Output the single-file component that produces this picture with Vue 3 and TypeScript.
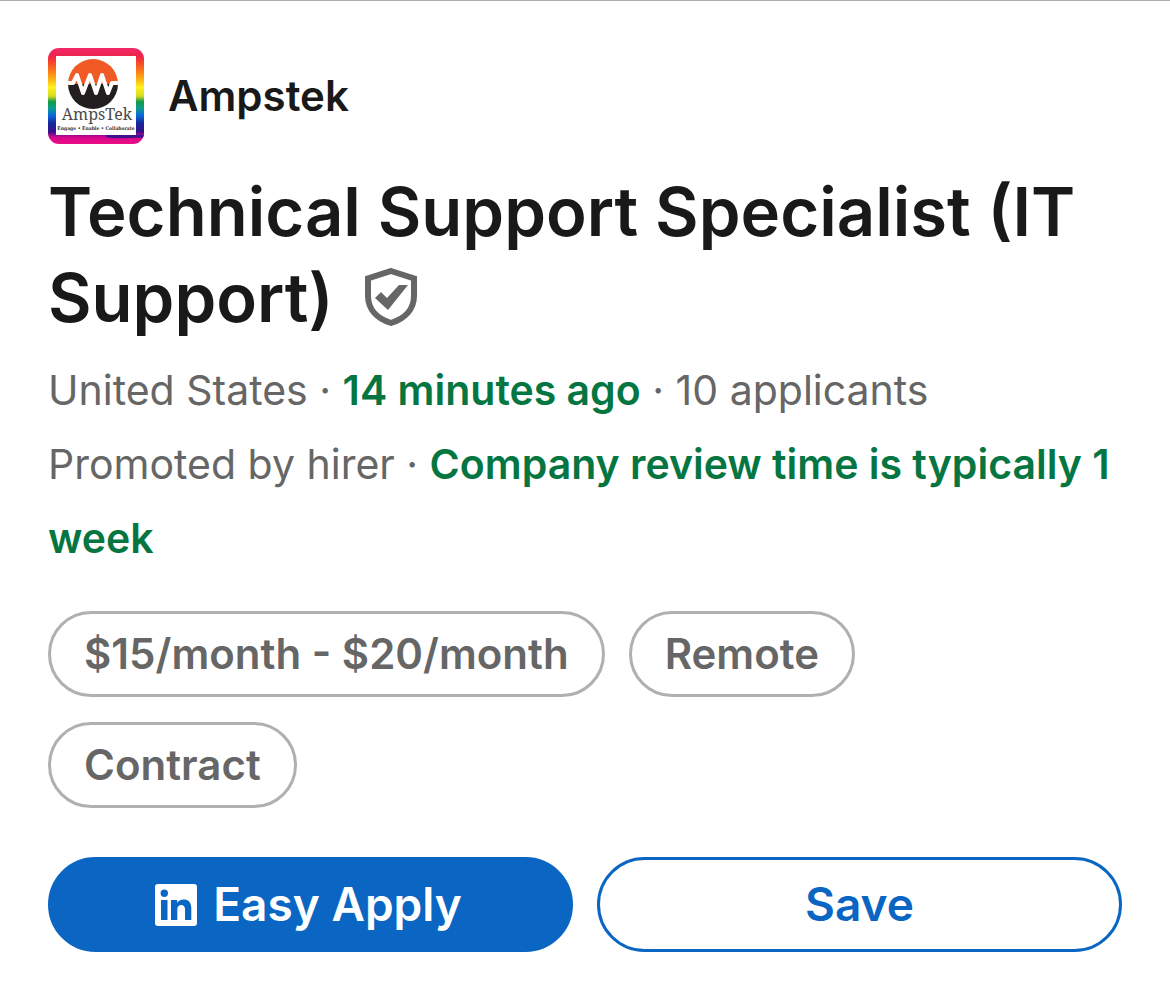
<script setup lang="ts">
import { ref } from 'vue'

interface Job {
  company: string
  title: string
  place: string
  posted: string
  applicants: string
  promotion: string
  review: string
  tags: string[]
}

const job: Job = {
  company: 'Ampstek',
  title: 'Technical Support Specialist (IT Support)',
  place: 'United States',
  posted: '14 minutes ago',
  applicants: '10 applicants',
  promotion: 'Promoted by hirer',
  review: 'Company review time is typically 1 week',
  tags: ['$15/month - $20/month', 'Remote', 'Contract'],
}

const saved = ref(false)
</script>

<template>
  <main class="job">
    <header class="company">
      <svg class="logo" viewBox="0 0 96 96" role="img" aria-label="AmpsTek logo">
        <defs>
          <linearGradient id="rainbow" x1="0" y1="0" x2="0" y2="1">
            <stop offset="0" stop-color="#f0286a" />
            <stop offset="0.09" stop-color="#ee2448" />
            <stop offset="0.14" stop-color="#f5402e" />
            <stop offset="0.24" stop-color="#fb7a17" />
            <stop offset="0.33" stop-color="#fdb515" />
            <stop offset="0.41" stop-color="#fff01c" />
            <stop offset="0.5" stop-color="#d5dc20" />
            <stop offset="0.56" stop-color="#0f9a48" />
            <stop offset="0.63" stop-color="#0b9c8c" />
            <stop offset="0.7" stop-color="#0869dc" />
            <stop offset="0.78" stop-color="#142a9c" />
            <stop offset="0.87" stop-color="#35108a" />
            <stop offset="0.93" stop-color="#d4088e" />
            <stop offset="1" stop-color="#ec0c82" />
          </linearGradient>
          <clipPath id="frame"><rect width="96" height="96" rx="11" /></clipPath>
          <clipPath id="disc"><circle cx="45" cy="36" r="25" /></clipPath>
        </defs>
        <g clip-path="url(#frame)">
          <rect width="96" height="96" fill="url(#rainbow)" />
          <path d="M58 87h38v3c-12-1-25 2-38-1z" fill="#41108c" />
          <rect x="8" y="8" width="80" height="79" fill="#fff" />
          <g clip-path="url(#disc)">
            <rect x="20" y="10" width="50" height="26" fill="#f15a24" />
            <rect x="20" y="36" width="50" height="26" fill="#231f20" />
            <path
              d="M18 35h7l4-8 6 18 7-18 6 18 6-18 6 18 4-10h8"
              fill="none"
              stroke="#fff"
              stroke-width="4"
              stroke-linejoin="round"
            />
          </g>
          <text class="logo-name" x="49" y="72" text-anchor="middle">AmpsTek</text>
          <text class="logo-motto" x="48" y="82" text-anchor="middle">Engage • Enable • Collaborate</text>
        </g>
      </svg>
      <a class="company-name" href="#">{{ job.company }}</a>
    </header>

    <h1 class="title">
      {{ job.title }}
      <svg class="shield" viewBox="0 0 54 58" role="img" aria-label="Verified job">
        <path
          d="M27 3 50 10.500V28C50 41 41 50.500 27 55 13 50.500 4 41 4 28V10.500Z"
          fill="none"
          stroke="#666"
          stroke-width="6"
        />
        <path d="M11 30 17 24 23 30 35 17H44L24 42Z" fill="#666" />
      </svg>
    </h1>

    <p class="meta">
      {{ job.place }} · <strong>{{ job.posted }}</strong> · {{ job.applicants }}
    </p>
    <p class="meta">
      {{ job.promotion }} · <strong>{{ job.review }}</strong>
    </p>

    <ul class="tags">
      <li v-for="tag in job.tags" :key="tag" class="tag">{{ tag }}</li>
    </ul>

    <div class="actions">
      <button class="action apply" type="button">
        <svg class="linkedin" viewBox="0 0 42 42" aria-hidden="true">
          <path
            fill="#fff"
            fill-rule="evenodd"
            d="M3 0H39A3 3 0 0 1 42 3V39A3 3 0 0 1 39 42H3A3 3 0 0 1 0 39V3A3 3 0 0 1 3 0ZM9.300 5.500A3.700 3.700 0 1 0 9.300 12.900 3.700 3.700 0 1 0 9.300 5.500ZM6 16V36H12.500V16ZM16 16V36H22.300V25.500C22.300 22.500 24 21 26.300 21S30 22.500 30 25.500V36H36.300V24C36.300 18 33 15.500 28.600 15.500 25.500 15.500 23.300 17 22.200 18.900V16Z"
          />
        </svg>
        <span>Easy Apply</span>
      </button>
      <button class="action save" type="button" :aria-pressed="saved" @click="saved = !saved">Save</button>
    </div>
  </main>
</template>

<style>
body {
  margin: 0;
  background: #fff;
}
</style>

<style scoped>
.job {
  box-sizing: border-box;
  border-top: 1px solid #acacac;
  padding: 47px 48px;
  font-family: Inter, "Liberation Sans", sans-serif;
  color: #191919;
}
.company {
  display: flex;
  align-items: center;
  gap: 24px;
}
.logo {
  width: 96px;
  height: 96px;
  flex: none;
}
.logo-name {
  font: 16px "Noto Serif", "DejaVu Serif", serif;
  fill: #4a4a4a;
}
.logo-motto {
  font: bold 5px "DejaVu Serif Condensed", "Liberation Serif", serif;
  fill: #333;
}
.company-name {
  font-size: 42px;
  font-weight: 600;
  line-height: 58px;
  color: inherit;
  text-decoration: none;
}
.title {
  margin: 25px 0 12px;
  font-size: 67px;
  font-weight: 600;
  line-height: 86px;
}
.shield {
  width: 54px;
  height: 58px;
  margin-left: 14px;
  vertical-align: -4px;
}
.meta {
  margin: 0;
  font-size: 41px;
  line-height: 74px;
  color: #666;
}
.meta strong {
  font-weight: 600;
  color: #057642;
}
.tags {
  display: flex;
  flex-wrap: wrap;
  gap: 25px 24px;
  margin: 36px 0 0;
  padding: 0;
  list-style: none;
}
.tag {
  border: 3px solid #b0b0b0;
  border-radius: 43px;
  padding: 0 33px;
  font-size: 42px;
  font-weight: 600;
  line-height: 80px;
  color: #666;
}
.actions {
  display: grid;
  grid-template-columns: 1fr 1fr;
  gap: 24px;
  margin-top: 49px;
}
.action {
  display: flex;
  align-items: center;
  justify-content: center;
  gap: 16px;
  border: 3px solid #0a66c2;
  border-radius: 48px;
  padding: 0 24px;
  font: inherit;
  font-size: 46px;
  font-weight: 600;
  line-height: 89px;
  cursor: pointer;
}
.apply {
  padding-right: 28px;
  background: #0a66c2;
  color: #fff;
}
.save {
  background: #fff;
  color: #0a66c2;
}
.linkedin {
  width: 42px;
  height: 42px;
}
</style>
